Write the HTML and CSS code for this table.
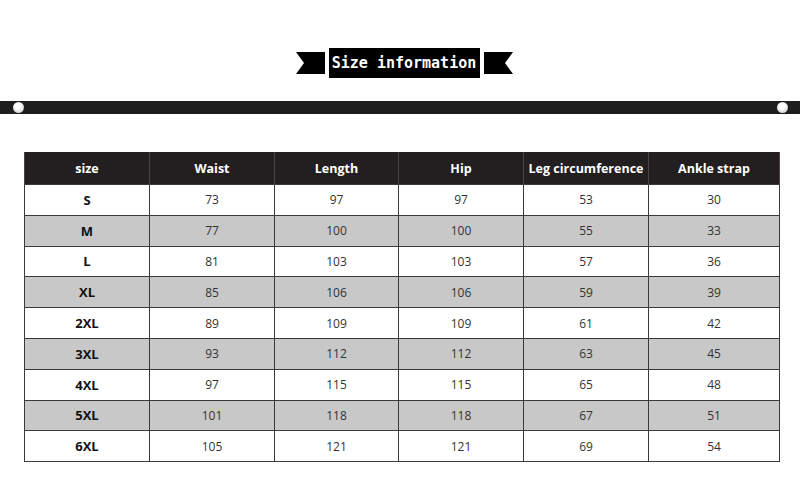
FILE: index.html
```html
<!DOCTYPE html>
<html>
<head>
<meta charset="utf-8">
<link rel="stylesheet" href="styles.css">
</head>
<body>
<div class="page">
  <div class="ribbon">
    <svg class="tail" width="29" height="22" viewBox="0 0 29 22"><polygon points="0,0 29,0 29,22 0,22 8,11" fill="#000"/></svg>
    <div class="ribbon-box">Size information</div>
    <svg class="tail" width="29" height="22" viewBox="0 0 29 22"><polygon points="0,0 29,0 21,11 29,22 0,22" fill="#000"/></svg>
  </div>
  <div class="bar">
    <span class="dot"></span>
    <span class="dot"></span>
  </div>
  <table class="sizes">
    <colgroup>
      <col class="c1"><col class="c2"><col class="c3"><col class="c4"><col class="c5"><col class="c6">
    </colgroup>
    <thead>
      <tr><th>size</th><th>Waist</th><th>Length</th><th>Hip</th><th>Leg circumference</th><th>Ankle strap</th></tr>
    </thead>
    <tbody>
      <tr><td class="sz">S</td><td>73</td><td>97</td><td>97</td><td>53</td><td>30</td></tr>
      <tr class="alt"><td class="sz">M</td><td>77</td><td>100</td><td>100</td><td>55</td><td>33</td></tr>
      <tr><td class="sz">L</td><td>81</td><td>103</td><td>103</td><td>57</td><td>36</td></tr>
      <tr class="alt"><td class="sz">XL</td><td>85</td><td>106</td><td>106</td><td>59</td><td>39</td></tr>
      <tr><td class="sz">2XL</td><td>89</td><td>109</td><td>109</td><td>61</td><td>42</td></tr>
      <tr class="alt"><td class="sz">3XL</td><td>93</td><td>112</td><td>112</td><td>63</td><td>45</td></tr>
      <tr><td class="sz">4XL</td><td>97</td><td>115</td><td>115</td><td>65</td><td>48</td></tr>
      <tr class="alt"><td class="sz">5XL</td><td>101</td><td>118</td><td>118</td><td>67</td><td>51</td></tr>
      <tr><td class="sz">6XL</td><td>105</td><td>121</td><td>121</td><td>69</td><td>54</td></tr>
    </tbody>
  </table>
</div>
</body>
</html>
```
FILE: styles.css
```css
html, body {
  margin: 0;
  padding: 0;
  background: #fff;
}
.page {
  width: 800px;
  height: 480px;
  overflow: hidden;
  font-family: "Open Sans", "Noto Sans", sans-serif;
}
.ribbon {
  display: flex;
  align-items: center;
  justify-content: center;
  gap: 4px;
  padding-top: 48px;
  margin-left: 8px;
}
.tail {
  display: block;
}
.ribbon-box {
  width: 151px;
  height: 30px;
  background: #000;
  color: #fff;
  font-family: "DejaVu Sans Mono", "Liberation Mono", monospace;
  font-size: 15px;
  font-weight: bold;
  line-height: 30px;
  text-align: center;
}
.bar {
  margin-top: 23px;
  height: 13px;
  background: #1e1e1e;
  display: flex;
  align-items: center;
  justify-content: space-between;
  padding: 0 12px 0 13px;
}
.dot {
  width: 11px;
  height: 11px;
  border-radius: 50%;
  background: radial-gradient(circle at 45% 40%, #fff 30%, #cfcfcf 75%, #888 100%);
}
.sizes {
  margin-top: 38px;
  margin-left: 24px;
  border-collapse: collapse;
  table-layout: fixed;
  width: 755px;
}
.c1, .c2, .c4, .c5 { width: 125px; }
.c3 { width: 124px; }
.c6 { width: 131px; }
.sizes th {
  background: #231f20;
  color: #fff;
  font-size: 12.5px;
  font-weight: bold;
  height: 32px;
  padding: 0;
  white-space: nowrap;
  border-left: 1px solid #444;
  border-right: 1px solid #444;
}
.sizes td {
  height: 29.8px;
  padding: 0;
  border: 1px solid #3a3a3a;
  text-align: center;
  font-size: 12px;
  color: #333;
}
.sizes td.sz {
  font-weight: bold;
  color: #111;
  font-size: 13px;
}
.sizes tr.alt td {
  background: #c8c8c8;
}
```
